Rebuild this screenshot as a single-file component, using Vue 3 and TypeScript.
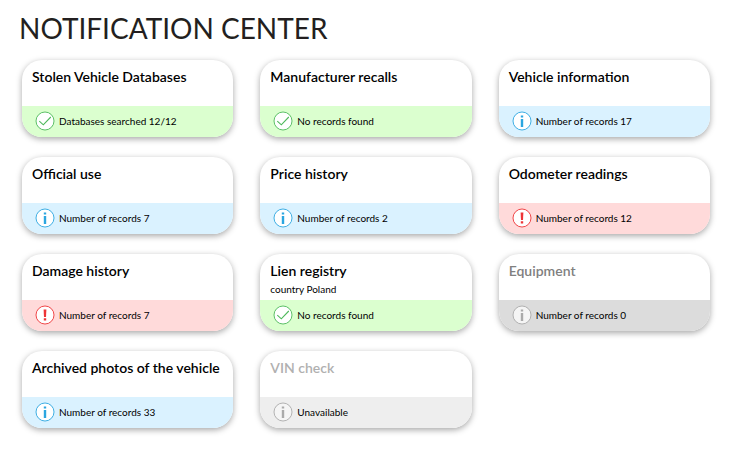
<script setup lang="ts">
type Kind = 'ok' | 'info' | 'alert' | 'muted' | 'off'

interface Card {
  title: string
  sub?: string
  status: string
  kind: Kind
}

const cards: Card[] = [
  { title: 'Stolen Vehicle Databases', status: 'Databases searched 12/12', kind: 'ok' },
  { title: 'Manufacturer recalls', status: 'No records found', kind: 'ok' },
  { title: 'Vehicle information', status: 'Number of records 17', kind: 'info' },
  { title: 'Official use', status: 'Number of records 7', kind: 'info' },
  { title: 'Price history', status: 'Number of records 2', kind: 'info' },
  { title: 'Odometer readings', status: 'Number of records 12', kind: 'alert' },
  { title: 'Damage history', status: 'Number of records 7', kind: 'alert' },
  { title: 'Lien registry', sub: 'country Poland', status: 'No records found', kind: 'ok' },
  { title: 'Equipment', status: 'Number of records 0', kind: 'muted' },
  { title: 'Archived photos of the vehicle', status: 'Number of records 33', kind: 'info' },
  { title: 'VIN check', status: 'Unavailable', kind: 'off' },
]
</script>

<template>
  <main class="page">
    <h1>NOTIFICATION CENTER</h1>
    <div class="grid">
      <section v-for="card in cards" :key="card.title" class="card" :class="card.kind">
        <div class="head">
          <h2>{{ card.title }}</h2>
          <p v-if="card.sub">{{ card.sub }}</p>
        </div>
        <div class="status">
          <svg viewBox="0 0 20 20" aria-hidden="true">
            <circle class="ring" cx="10" cy="10" r="9" />
            <path v-if="card.kind === 'ok'" class="tick" d="M4.3 10.2 8.3 13.8 15.8 6" />
            <template v-else-if="card.kind === 'alert'">
              <path class="solid" d="M8.6 4.4h2.8l-.4 7.6H9z" />
              <path class="solid" d="M8.8 13.2h2.4v2.2H8.8z" />
            </template>
            <template v-else>
              <path class="solid" d="M8.8 4.6h2.4v2H8.8z" />
              <path class="solid" d="M8.8 8h2.4v8H8.8z" />
            </template>
          </svg>
          <span>{{ card.status }}</span>
        </div>
      </section>
    </div>
  </main>
</template>

<style>
body {
  margin: 0;
  background: #fff;
}
</style>

<style scoped>
.page {
  padding: 10px 32px 20px 22px;
  font-family: Lato, sans-serif;
  color: #000;
}
h1 {
  margin: 0 0 14px -3px;
  font-size: 28px;
  line-height: 36px;
  font-weight: 400;
  color: #231f20;
}
.grid {
  display: grid;
  grid-template-columns: repeat(3, 1fr);
  gap: 20px 27px;
}
.card {
  display: flex;
  flex-direction: column;
  min-height: 77px;
  border-radius: 20px;
  overflow: hidden;
  background: #fff;
  box-shadow: 0 2px 6px rgba(0, 0, 0, 0.35);
}
.head {
  flex: 1;
  padding: 7px 0 0 10px;
}
h2 {
  margin: 0;
  font-size: 14px;
  line-height: 20px;
  font-weight: 600;
  white-space: nowrap;
}
p {
  margin: 0;
  font-size: 10px;
  line-height: 16px;
}
.status {
  display: flex;
  align-items: center;
  gap: 4px;
  height: 29px;
  padding: 0 0 2px 13px;
  font-size: 10px;
}
svg {
  width: 20px;
  height: 20px;
}
.ring {
  fill: #fff;
  stroke: currentColor;
  stroke-width: 0.9;
}
.solid {
  fill: currentColor;
}
.tick {
  fill: none;
  stroke: currentColor;
  stroke-width: 1.1;
}
.ok .status { background: #dbffcf; }
.ok svg { color: #4db85a; }
.info .status { background: #daf2ff; }
.info svg { color: #2ba6e0; }
.alert .status { background: #ffdada; }
.alert svg { color: #ee3437; }
.muted .status { background: #dcdcdc; }
.muted svg { color: #aaa; }
.muted .ring { fill: #f5f5f5; }
.muted h2 { color: #808080; }
.off .status { background: #eee; }
.off svg { color: #aaa; }
.off .ring { fill: #f5f5f5; }
.off h2 { color: #b0b0b0; }
</style>
